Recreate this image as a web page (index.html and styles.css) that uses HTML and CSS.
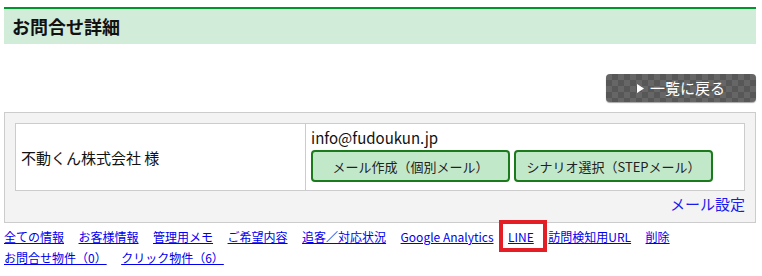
FILE: index.html
```html
<!DOCTYPE html>
<html lang="ja">
<head>
<meta charset="utf-8">
<title>お問合せ詳細</title>
<link rel="stylesheet" href="styles.css">
</head>
<body>
<div class="page">
  <h1 class="page-title">お問合せ詳細</h1>
  <div class="actions">
    <a class="back-btn" href="#"><svg class="back-arrow" width="7" height="9" viewBox="0 0 7 9"><polygon points="0,0 7,4.5 0,9" fill="#fff"/></svg><span>一覧に戻る</span></a>
  </div>
  <div class="detail-box">
    <table class="detail-table">
      <tr>
        <td class="name-cell">不動くん株式会社 様</td>
        <td class="mail-cell">
          <div class="mail-addr">info@fudoukun.jp</div>
          <div class="mail-buttons">
            <button class="mail-btn" type="button">メール作成（個別メール）</button>
            <button class="mail-btn" type="button">シナリオ選択（STEPメール）</button>
          </div>
        </td>
      </tr>
    </table>
    <div class="mail-setting"><a href="#">メール設定</a></div>
  </div>
  <nav class="tabs">
    <a href="#">全ての情報</a>
    <a href="#">お客様情報</a>
    <a href="#">管理用メモ</a>
    <a href="#">ご希望内容</a>
    <a href="#">追客／対応状況</a>
    <a href="#">Google Analytics</a>
    <span class="marked"><a href="#">LINE</a><span class="mark-box"></span></span>
    <a href="#">訪問検知用URL</a>
    <a href="#">削除</a>
    <a href="#">お問合せ物件（0）</a>
    <a href="#">クリック物件（6）</a>
  </nav>
</div>
</body>
</html>
```
FILE: styles.css
```css
* { box-sizing: border-box; }
html, body { margin: 0; padding: 0; background: #fff; }
body {
  font-family: "Noto Sans CJK JP", "Noto Sans", sans-serif;
  color: #111;
}
.page {
  width: 752px;
  margin: 7px 0 0 4px;
}
.page-title {
  margin: 0;
  height: 37px;
  border-top: 2px solid #00962e;
  background: #d2ecda;
  font-size: 18px;
  font-weight: bold;
  line-height: 35px;
  padding-left: 8px;
  color: #111;
}
.actions {
  display: flex;
  justify-content: flex-end;
  margin-top: 30px;
}
.back-btn {
  width: 150px;
  height: 28px;
  border-radius: 4px;
  display: flex;
  align-items: center;
  justify-content: center;
  gap: 6px;
  color: #fff;
  text-decoration: none;
  font-size: 15px;
  line-height: 28px;
  background-color: #5e5e5e;
  background-image: conic-gradient(#575757 25%, #666 0 50%, #575757 0 75%, #666 0);
  background-size: 12px 12px;
  box-shadow: 0 1px 1px rgba(0,0,0,0.35);
}
.back-arrow { display: block; }
.detail-box {
  margin-top: 10px;
  border: 1px solid #ccc;
  background: #f3f3f3;
  padding: 10px 10px 7px;
}
.detail-table {
  width: 730px;
  border-collapse: collapse;
  background: #fff;
}
.detail-table td {
  border: 1px solid #ccc;
}
.name-cell {
  width: 290px;
  padding: 0 5px;
  font-size: 15px;
  vertical-align: middle;
}
.mail-cell {
  padding: 3px 5px 8px;
  vertical-align: top;
}
.mail-addr {
  font-size: 15px;
  line-height: 22px;
}
.mail-buttons {
  display: flex;
  gap: 4px;
  margin-top: 1px;
}
.mail-btn {
  width: 199px;
  height: 32px;
  border: 2px solid #1b7a1b;
  border-radius: 4px;
  background: #c2e8ca;
  color: #222;
  font-family: "Noto Sans CJK JP", "Noto Sans", sans-serif;
  font-size: 13px;
  padding: 0;
}
.mail-setting {
  margin-top: 2px;
  text-align: right;
  font-size: 15px;
  line-height: 22px;
}
.mail-setting a {
  color: #1a1aee;
  text-decoration: none;
}
.tabs {
  display: flex;
  flex-wrap: wrap;
  column-gap: 14.5px;
  margin-top: 3px;
  font-size: 12px;
  line-height: 21px;
}
.tabs a {
  color: #0000ee;
  text-decoration: underline;
}
.marked {
  position: relative;
}
.mark-box {
  position: absolute;
  left: -9px;
  right: -13px;
  top: -6px;
  bottom: -5px;
  border: 4px solid #e31e24;
}
```
